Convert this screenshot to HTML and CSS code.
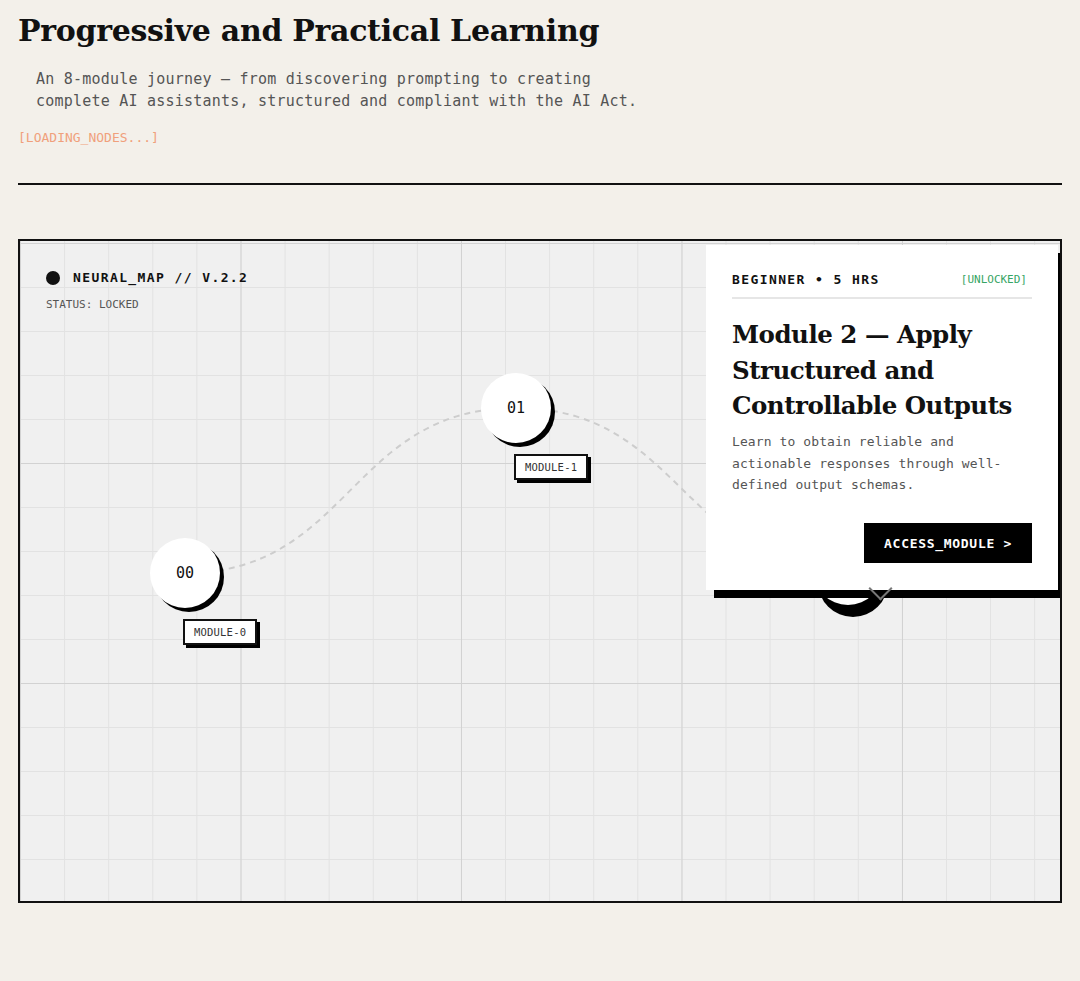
FILE: index.html
```html
<!DOCTYPE html>
<html lang="en">
<head>
    <meta charset="UTF-8">
    <meta name="viewport" content="width=device-width, initial-scale=1.0">
    <title>Progressive and Practical Learning</title>
    <link rel="stylesheet" href="styles.css">
</head>
<body>
    <h1>Progressive and Practical Learning</h1>
    <p class="lead">An 8-module journey — from discovering prompting to creating<br>complete AI assistants, structured and compliant with the AI Act.</p>
    <div class="loading">[LOADING_NODES...]</div>

    <hr class="rule">

    <div class="map">
        <div class="legend">
            <div class="legend-title"><span class="dot"></span>NEURAL_MAP // V.2.2</div>
            <div class="legend-status">STATUS: LOCKED</div>
        </div>

        <svg class="links" width="1040" height="660" viewBox="0 0 1040 660">
            <path d="M165 332 C330 332 330 167 496 167 C662 167 662 329 828 329" />
        </svg>

        <div class="node" style="left: 130px; top: 297px;">00</div>
        <div class="node-label" style="left: 163px; top: 378px;">MODULE-0</div>

        <div class="node" style="left: 461px; top: 132px;">01</div>
        <div class="node-label" style="left: 494px; top: 213px;">MODULE-1</div>

        <div class="node active" style="left: 793px; top: 294px;">02</div>

        <div class="card">
            <div class="card-head">
                <span class="card-meta">BEGINNER • 5 HRS</span>
                <span class="card-state">[UNLOCKED]</span>
            </div>
            <h2 class="card-title">Module 2 — Apply Structured and Controllable Outputs</h2>
            <p class="card-desc">Learn to obtain reliable and actionable responses through well-defined output schemas.</p>
            <div class="card-actions">
                <button class="access">ACCESS_MODULE &gt;</button>
            </div>
            <span class="card-arrow"></span>
        </div>
    </div>
</body>
</html>
```

FILE: styles.css
```css
body {
    margin: 0;
    padding: 12px 18px 40px;
    background-color: #f3f0ea;
    color: #111;
    font-family: "DejaVu Sans Mono", monospace;
}
h1 {
    margin: 0;
    font-family: "DejaVu Serif", serif;
    font-weight: bold;
    font-size: 30px;
    line-height: 38px;
    letter-spacing: -0.3px;
    color: #111;
}
.lead {
    margin: 18px 0 0;
    padding-left: 18px;
    font-size: 15px;
    line-height: 22px;
    letter-spacing: 0.22px;
    color: #555;
}
.loading {
    margin-top: 17px;
    font-size: 13px;
    line-height: 18px;
    color: #f0a07c;
}
.rule {
    margin: 36px 0 0;
    border: 0;
    border-top: 2px solid #111;
}

/* neural map canvas */
.map {
    position: relative;
    margin-top: 54px;
    height: 660px;
    border: 2px solid #111;
    overflow: hidden;
    background-color: #f0f0f0;
    background-image:
        linear-gradient(#d2d2d2 1px, transparent 1px),
        linear-gradient(90deg, #d2d2d2 1px, transparent 1px),
        linear-gradient(#e2e2e2 1px, transparent 1px),
        linear-gradient(90deg, #e2e2e2 1px, transparent 1px);
    background-size: 220px 220px, 220.5px 220px, 44px 44px, 44.1px 44px;
    background-position: 0 2px, 0 0, 0 2px, 0 0;
}
.legend {
    position: absolute;
    left: 26px;
    top: 28px;
}
.legend-title {
    display: flex;
    align-items: center;
    gap: 13px;
    font-size: 13px;
    font-weight: bold;
    letter-spacing: 1.4px;
    line-height: 18px;
}
.dot {
    width: 14px;
    height: 14px;
    border-radius: 50%;
    background: #111;
}
.legend-status {
    margin-top: 11px;
    font-size: 11px;
    color: #555;
}
.links {
    position: absolute;
    left: 0;
    top: 0;
}
.links path {
    fill: none;
    stroke: #cdcdcd;
    stroke-width: 2;
    stroke-dasharray: 6 5;
}
.node {
    position: absolute;
    width: 70px;
    height: 70px;
    border-radius: 50%;
    background: #fff;
    box-shadow: 4px 4px 0 #000;
    display: flex;
    align-items: center;
    justify-content: center;
    font-size: 15px;
    color: #111;
}
.node.active {
    box-shadow: 5px 12px 0 #000;
}
.node-label {
    position: absolute;
    padding: 5px 9px;
    background: #fff;
    border: 2px solid #111;
    box-shadow: 3px 3px 0 #000;
    font-size: 10.5px;
    line-height: 12px;
    letter-spacing: 0.2px;
    color: #333;
}

/* module card */
.card {
    position: absolute;
    top: 4px;
    right: 2px;
    z-index: 2;
    width: 300px;
    padding: 27px 26px 27px;
    background: #fff;
    box-shadow: 8px 8px 0 #000;
}
.card-head {
    display: flex;
    justify-content: space-between;
    align-items: center;
    padding-bottom: 9px;
    border-bottom: 2px solid #e6e6e6;
    line-height: 16px;
}
.card-meta {
    font-size: 13px;
    font-weight: bold;
    letter-spacing: 1.4px;
    color: #111;
}
.card-state {
    margin-right: 5px;
    font-size: 11px;
    color: #36a565;
}
.card-title {
    margin: 18px 0 0;
    font-family: "DejaVu Serif", serif;
    font-weight: bold;
    font-size: 24.5px;
    line-height: 35.5px;
    letter-spacing: -0.5px;
    color: #111;
}
.card-desc {
    margin: 7.5px 0 0;
    font-size: 13px;
    line-height: 21.5px;
    letter-spacing: 0.1px;
    color: #555;
}
.card-actions {
    display: flex;
    justify-content: flex-end;
    margin-top: 27.5px;
}
.access {
    height: 40px;
    padding: 0 20px;
    border: 0;
    background: #000;
    color: #fff;
    font-family: "DejaVu Sans Mono", monospace;
    font-size: 13px;
    font-weight: bold;
    letter-spacing: 0.7px;
    cursor: pointer;
}
.card-arrow {
    position: absolute;
    left: 166px;
    bottom: -7px;
    width: 15px;
    height: 15px;
    border-right: 2px solid #777;
    border-bottom: 2px solid #777;
    transform: rotate(45deg);
}
```
